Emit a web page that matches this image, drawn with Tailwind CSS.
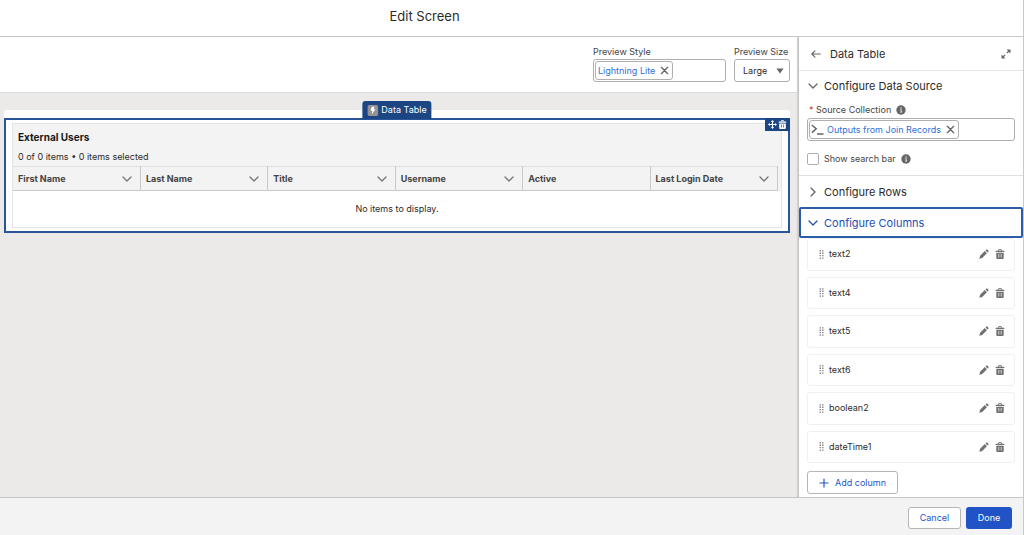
<!DOCTYPE html>
<html lang="en">
  <head>
    <meta charset="UTF-8" />
    <meta name="viewport" content="width=device-width, initial-scale=1.0" />
    <title>Edit Screen</title>
    <script src="https://cdn.jsdelivr.net/npm/@tailwindcss/browser@4"></script>
  </head>
  <body class="h-screen flex flex-col overflow-hidden bg-white border-r border-[#c9c9c9] font-['Inter','Liberation_Sans',sans-serif] text-[9px] leading-3 text-[#2b2b2b]">
    <!-- Shared icons -->
    <svg class="hidden">
      <symbol id="chevron" viewBox="0 0 10 10">
        <path d="M1 3l4 4 4-4" fill="none" stroke="currentColor" stroke-width="1.3" stroke-linecap="round" stroke-linejoin="round" />
      </symbol>
      <symbol id="close" viewBox="0 0 10 10">
        <path d="M1.500 1.500l7 7M8.500 1.500l-7 7" fill="none" stroke="currentColor" stroke-width="1.500" stroke-linecap="round" />
      </symbol>
      <symbol id="info" viewBox="0 0 10 10">
        <circle cx="5" cy="5" r="4.700" fill="currentColor" />
        <circle cx="5" cy="2.900" r=".7" fill="#fff" />
        <path d="M4.300 4.600H5.200V7M4.200 7.100H6.100" fill="none" stroke="#fff" stroke-width=".8" />
      </symbol>
      <symbol id="grip" viewBox="0 0 5 9">
        <path d="M1.200 .2v9M3.800 .2v9" fill="none" stroke="currentColor" stroke-width="1.300" stroke-dasharray="1.300 1.100" />
      </symbol>
      <symbol id="pencil" viewBox="0 0 10 10">
        <path d="M.3 9.700l.8-2.900 4.700-4.700 2.100 2.100-4.700 4.700zM6.500 1.400l.8-.8q.5-.4 1 0l1.100 1.100q.4.500 0 1l-.8.800z" fill="currentColor" />
      </symbol>
      <symbol id="trash" viewBox="0 0 10 10">
        <path d="M3.500 2V1.200q0-.6.600-.6h1.800q.6 0 .6.600V2" fill="none" stroke="currentColor" />
        <rect x=".6" y="1.700" width="8.800" height="1.400" rx=".5" fill="currentColor" />
        <path fill-rule="evenodd" d="M1.300 3.800h7.400v5.100q0 1-1 1H2.300q-1 0-1-1zM3.500 5v3.400h.7V5zM5.800 5v3.400h.7V5z" fill="currentColor" />
      </symbol>
    </svg>

    <!-- Header -->
    <header class="h-[37px] shrink-0 border-b border-[#c4c4c4]">
      <h1 class="w-[83%] pt-1.5 text-center text-[13px] leading-5">Edit Screen</h1>
    </header>

    <main class="flex-1 min-h-0 flex">
      <!-- Preview -->
      <section class="flex-1 min-w-0 flex flex-col">
        <div class="h-14 shrink-0 flex justify-end gap-2 pt-2 pr-2 border-b border-[#dddbda]">
          <div class="w-[133px]">
            <label for="previewStyle" class="block h-[14px] leading-[14px] text-[#444]">Preview Style</label>
            <div class="h-[23px] flex items-center p-px border border-[#aeaeae] rounded-[3px]">
              <span class="h-[19px] shrink-0 flex items-center gap-[5px] pl-[2px] pr-[3px] border border-[#b0b0b0] rounded-[3px]">
                <a href="#" class="text-[#2e6fd8]">Lightning Lite</a>
                <button aria-label="Remove Lightning Lite" class="text-[#666]"><svg class="block size-[9px]"><use href="#close" /></svg></button>
              </span>
              <input id="previewStyle" type="text" class="min-w-0 flex-1 outline-none" />
            </div>
          </div>
          <div class="w-14">
            <label for="previewSize" class="block h-[14px] leading-[14px] whitespace-nowrap text-[#444]">Preview Size</label>
            <div class="relative">
              <select id="previewSize" class="block w-full h-[23px] pl-2 appearance-none bg-white border border-[#aeaeae] rounded-[3px]">
                <option>Large</option>
                <option>Medium</option>
                <option>Small</option>
              </select>
              <svg viewBox="0 0 8 6" class="absolute right-1.5 top-[9px] w-2 h-1.5 pointer-events-none"><path d="M.4.500h7.200L4 5.500z" fill="#666" /></svg>
            </div>
          </div>
        </div>

        <div class="flex-1 pt-[17px] pl-1 pr-2 bg-[#ebeae8]">
          <div class="pt-2 bg-white rounded-t-[3px]">
            <div class="relative border-2 border-[#2a5599] px-[6px] pt-[3px] pb-[3px]">
              <div class="absolute left-1/2 -translate-x-1/2 -top-[19px] h-[18px] flex items-center gap-[3px] px-[5px] bg-[#1b4583] text-white rounded-t-[3px] whitespace-nowrap">
                <svg viewBox="0 0 11 11" class="size-[11px]"><rect width="11" height="11" rx="2" fill="#939393" /><path d="M4.300 1.800h3L6.200 4.300h1.900L4.300 9.400l.8-3.600H3.200z" fill="#fff" /></svg>
                Data Table
              </div>
              <div class="absolute -right-0.5 -top-0.5 h-[13px] flex items-center gap-px px-[3px] bg-[#1b4583] text-white">
                <button aria-label="Move"><svg viewBox="0 0 10 10" class="block size-[9px]"><path d="M5 1v8M1 5h8" stroke="currentColor" stroke-width="1.300" /><path d="M5 0l1.800 2.200H3.200zM5 10l1.800-2.200H3.200zM0 5l2.200-1.800v3.600zM10 5L7.800 3.200v3.600z" fill="currentColor" /></svg></button>
                <button aria-label="Delete"><svg class="block size-[9px]"><use href="#trash" /></svg></button>
              </div>

              <div class="border border-[#e3e3e3]">
                <div class="h-[42px] px-[5px] pt-[7px] bg-[#f3f3f3]">
                  <h2 class="text-[10px] leading-3 font-bold text-[#181818]">External Users</h2>
                  <p class="mt-2">0 of 0 items • 0 items selected</p>
                </div>
                <div class="pr-[3px] bg-[#f3f3f3]">
                  <table class="w-full table-fixed border-collapse text-[#444]">
                    <thead>
                      <tr class="h-6 border-t border-t-[#e0e0e0] border-b border-b-[#c9c9c9] text-left">
                        <th class="px-[5px] border-r border-[#c9c9c9]"><div class="flex items-center justify-between">First Name<svg class="size-2.5 mr-[3px] text-[#747474]"><use href="#chevron" /></svg></div></th>
                        <th class="px-[5px] border-r border-[#c9c9c9]"><div class="flex items-center justify-between">Last Name<svg class="size-2.5 mr-[3px] text-[#747474]"><use href="#chevron" /></svg></div></th>
                        <th class="px-[5px] border-r border-[#c9c9c9]"><div class="flex items-center justify-between">Title<svg class="size-2.5 mr-[3px] text-[#747474]"><use href="#chevron" /></svg></div></th>
                        <th class="px-[5px] border-r border-[#c9c9c9]"><div class="flex items-center justify-between">Username<svg class="size-2.5 mr-[3px] text-[#747474]"><use href="#chevron" /></svg></div></th>
                        <th class="px-[5px] border-r border-[#c9c9c9]">Active</th>
                        <th class="px-[5px] border-r border-[#c9c9c9]"><div class="flex items-center justify-between">Last Login Date<svg class="size-2.5 mr-[3px] text-[#747474]"><use href="#chevron" /></svg></div></th>
                      </tr>
                    </thead>
                  </table>
                </div>
                <p class="h-9 leading-9 text-center">No items to display.</p>
              </div>
            </div>
          </div>
        </div>
      </section>

      <!-- Properties panel -->
      <aside class="w-[225px] shrink-0 border-l border-[#c4c4c4] shadow-[-1px_0_1px_#d4d4d4] z-10 bg-white">
        <div class="h-[34px] flex items-center px-3 border-b border-[#e5e5e5]">
          <button aria-label="Back"><svg viewBox="0 0 10 10" class="block size-2.5"><path d="M9.300 5H1M4 1.800L.8 5 4 8.200" fill="none" stroke="#666" stroke-width="1.100" stroke-linecap="round" stroke-linejoin="round" /></svg></button>
          <h2 class="ml-[9px] flex-1 text-[11px]">Data Table</h2>
          <button aria-label="Expand"><svg viewBox="0 0 10 10" class="block size-2.5"><path d="M5.800 4.200L8 2M4.200 5.800L2 8" stroke="#666" stroke-width="1.200" /><path d="M5.600.500h3.900v3.900zM.5 5.600v3.900h3.900z" fill="#666" /></svg></button>
        </div>

        <div class="h-[105px] pt-2 px-2 border-b border-[#e0e0e0]">
          <button class="h-[14px] flex items-center gap-1.5 pl-px text-[11px]"><svg class="size-2.5 text-[#666]"><use href="#chevron" /></svg>Configure Data Source</button>
          <div class="mt-[11px] h-3 flex items-center text-[#444]">
            <span class="w-[9px] pl-0.5 text-[#c23934]">*</span>
            <label for="source">Source Collection</label>
            <svg class="size-2.5 ml-[5px] text-[#666]"><use href="#info" /></svg>
          </div>
          <div class="mt-0.5 h-[23px] flex items-center p-px border border-[#aeaeae] rounded-[3px]">
            <span class="h-[19px] shrink-0 flex items-center gap-[3px] px-px border border-[#b0b0b0] rounded-[3px] whitespace-nowrap">
              <svg viewBox="0 0 13 11" class="w-[13px] h-[11px]"><path d="M.8 1l4.400 3.800L.8 8.600M6 10h6.500" fill="none" stroke="#666" stroke-width="1.500" /></svg>
              <a href="#" class="text-[#2e6fd8]">Outputs from Join Records</a>
              <button aria-label="Remove Outputs from Join Records" class="mx-0.5 text-[#666]"><svg class="block size-[9px]"><use href="#close" /></svg></button>
            </span>
            <input id="source" type="text" class="min-w-0 flex-1 outline-none" />
          </div>
          <div class="mt-3 h-3 flex items-center">
            <input id="searchBar" type="checkbox" class="size-3 appearance-none border border-[#aeaeae] rounded-[2px]" />
            <label for="searchBar" class="ml-[5px] text-[#444]">Show search bar</label>
            <svg class="size-2.5 ml-[5px] text-[#666]"><use href="#info" /></svg>
          </div>
        </div>

        <button class="w-full h-[31px] flex items-center gap-1.5 pl-[9px] pr-2 text-[11px]"><svg class="size-2.5 -rotate-90 text-[#666]"><use href="#chevron" /></svg>Configure Rows</button>
        <button class="w-full h-[31px] flex items-center gap-1.5 pl-[7px] pr-1.5 border-2 border-[#2b5cab] rounded-[2px] text-[11px] text-[#2450b0]"><svg class="size-2.5"><use href="#chevron" /></svg>Configure Columns</button>

        <ul class="h-[225px] px-2 flex flex-col gap-1.5">
          <li class="flex-1 flex items-center pl-[11px] pr-[9px] border border-[#f0f0f0] rounded-[3px]">
            <svg class="w-[5px] h-[9px] mr-[5px] text-[#777]"><use href="#grip" /></svg><span class="flex-1">text2</span>
            <button aria-label="Edit text2" class="mr-1.5 text-[#707070]"><svg class="block size-2.5"><use href="#pencil" /></svg></button>
            <button aria-label="Delete text2" class="text-[#707070]"><svg class="block size-2.5"><use href="#trash" /></svg></button>
          </li>
          <li class="flex-1 flex items-center pl-[11px] pr-[9px] border border-[#f0f0f0] rounded-[3px]">
            <svg class="w-[5px] h-[9px] mr-[5px] text-[#777]"><use href="#grip" /></svg><span class="flex-1">text4</span>
            <button aria-label="Edit text4" class="mr-1.5 text-[#707070]"><svg class="block size-2.5"><use href="#pencil" /></svg></button>
            <button aria-label="Delete text4" class="text-[#707070]"><svg class="block size-2.5"><use href="#trash" /></svg></button>
          </li>
          <li class="flex-1 flex items-center pl-[11px] pr-[9px] border border-[#f0f0f0] rounded-[3px]">
            <svg class="w-[5px] h-[9px] mr-[5px] text-[#777]"><use href="#grip" /></svg><span class="flex-1">text5</span>
            <button aria-label="Edit text5" class="mr-1.5 text-[#707070]"><svg class="block size-2.5"><use href="#pencil" /></svg></button>
            <button aria-label="Delete text5" class="text-[#707070]"><svg class="block size-2.5"><use href="#trash" /></svg></button>
          </li>
          <li class="flex-1 flex items-center pl-[11px] pr-[9px] border border-[#f0f0f0] rounded-[3px]">
            <svg class="w-[5px] h-[9px] mr-[5px] text-[#777]"><use href="#grip" /></svg><span class="flex-1">text6</span>
            <button aria-label="Edit text6" class="mr-1.5 text-[#707070]"><svg class="block size-2.5"><use href="#pencil" /></svg></button>
            <button aria-label="Delete text6" class="text-[#707070]"><svg class="block size-2.5"><use href="#trash" /></svg></button>
          </li>
          <li class="flex-1 flex items-center pl-[11px] pr-[9px] border border-[#f0f0f0] rounded-[3px]">
            <svg class="w-[5px] h-[9px] mr-[5px] text-[#777]"><use href="#grip" /></svg><span class="flex-1">boolean2</span>
            <button aria-label="Edit boolean2" class="mr-1.5 text-[#707070]"><svg class="block size-2.5"><use href="#pencil" /></svg></button>
            <button aria-label="Delete boolean2" class="text-[#707070]"><svg class="block size-2.5"><use href="#trash" /></svg></button>
          </li>
          <li class="flex-1 flex items-center pl-[11px] pr-[9px] border border-[#f0f0f0] rounded-[3px]">
            <svg class="w-[5px] h-[9px] mr-[5px] text-[#777]"><use href="#grip" /></svg><span class="flex-1">dateTime1</span>
            <button aria-label="Edit dateTime1" class="mr-1.5 text-[#707070]"><svg class="block size-2.5"><use href="#pencil" /></svg></button>
            <button aria-label="Delete dateTime1" class="text-[#707070]"><svg class="block size-2.5"><use href="#trash" /></svg></button>
          </li>
        </ul>
        <button class="mt-2 ml-2 h-[23px] flex items-center gap-1.5 px-[11px] border border-[#b5b5b5] rounded-[3px] text-[#2456c8]">
          <svg viewBox="0 0 10 10" class="size-2.5"><path d="M5 1v8M1 5h8" stroke="currentColor" stroke-width="1.200" stroke-linecap="round" /></svg>Add column
        </button>
      </aside>
    </main>

    <!-- Footer -->
    <footer class="h-[38px] shrink-0 flex items-center justify-end gap-[5px] pr-[11px] pt-[3px] border-t border-[#c4c4c4] bg-[#f3f3f3]">
      <button class="w-[53px] h-[22px] bg-white border border-[#b5b5b5] rounded-[3px] text-[#2456c8]">Cancel</button>
      <button class="w-[46px] h-[22px] bg-[#2153c6] rounded-[3px] text-white">Done</button>
    </footer>
  </body>
</html>
